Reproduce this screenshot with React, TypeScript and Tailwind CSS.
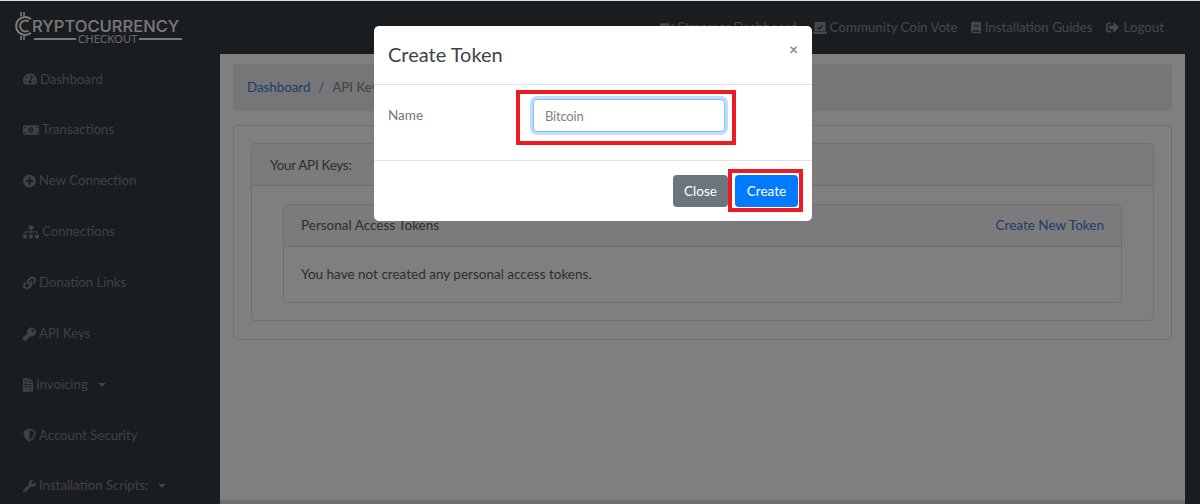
import React from 'react';
import {
  FaTachometerAlt,
  FaMoneyBillAlt,
  FaPlusCircle,
  FaSitemap,
  FaLink,
  FaKey,
  FaFileInvoice,
  FaShieldAlt,
  FaWrench,
  FaVideo,
  FaBook,
  FaSignOutAlt,
} from 'react-icons/fa';

const sideItems = [
  { label: 'Dashboard', icon: FaTachometerAlt, w: 'w-[14px]' },
  { label: 'Transactions', icon: FaMoneyBillAlt, w: 'w-[16px]' },
  { label: 'New Connection', icon: FaPlusCircle, w: 'w-[13px]' },
  { label: 'Connections', icon: FaSitemap, w: 'w-[16px]' },
  { label: 'Donation Links', icon: FaLink, w: 'w-[13px]' },
  { label: 'API Keys', icon: FaKey, w: 'w-[13px]' },
  { label: 'Invoicing', icon: FaFileInvoice, w: 'w-[10px]', caret: true },
  { label: 'Account Security', icon: FaShieldAlt, w: 'w-[13px]' },
  { label: 'Installation Scripts:', icon: FaWrench, w: 'w-[13px]', caret: true },
];

function LaptopCheck(): React.JSX.Element {
  return (
    <svg width="14" height="12" viewBox="0 0 14 12" className="shrink-0">
      <path
        fillRule="evenodd"
        fill="currentColor"
        d="M2.5 0h9a1 1 0 0 1 1 1v8h-11V1a1 1 0 0 1 1-1zM0 9.5h14V11a1 1 0 0 1-1 1H1a1 1 0 0 1-1-1z"
      />
      <path d="M4.5 5l2 2 3-3.5" fill="none" stroke="#343a40" strokeWidth="1.2" />
    </svg>
  );
}

function Logo(): React.JSX.Element {
  return (
    <div className="flex items-start text-[#f2f2f2] ml-[14px] mt-[1px]">
      <svg width="19" height="30" viewBox="0 0 19 30" fill="none" stroke="currentColor" className="mt-[-1px]">
        <path d="M17 8.2A9 9 0 1 0 17 21.8" strokeWidth="2" />
        <path d="M14.5 10.5A5.4 5.4 0 1 0 14.5 19.5" strokeWidth="2" />
        <path d="M7 1v4M10 1v4M7 25v4M10 25v4" strokeWidth="1.6" />
      </svg>
      <div className="w-[149px]">
        <div className="text-[16.5px] leading-[14px] font-medium mt-[7px] whitespace-nowrap font-['Inter',sans-serif] tracking-[0.03px] ml-[-1px]">
          RYPTOCURRENCY
        </div>
        <div className="flex items-center gap-[2px] mt-[1px] ml-[1px]">
          <span className="h-[2px] w-[43px] bg-[#f2f2f2]" />
          <span className="text-[11px] leading-[10px] w-[59px] text-center text-[#cfcfcf]">CHECKOUT</span>
          <span className="h-[2px] w-[44px] bg-[#f2f2f2]" />
        </div>
      </div>
    </div>
  );
}

function CreateTokenModal(): React.JSX.Element {
  return (
    <div className="absolute left-[374px] top-[26px] w-[438px] h-[195px] bg-white rounded-[5px] text-[#73767a]">
      <div className="h-[59px] border-b border-[#dee2e6] flex items-center justify-between pl-[14px] pr-[14px] pb-[2px]">
        <h5 className="text-[20px] text-[#3f4346] font-normal">Create Token</h5>
        <span className="text-[15px] font-bold text-[#888] mb-[10px] leading-none">×</span>
      </div>
      <div className="h-[76px] border-b border-[#dee2e6] flex items-center pl-[14px] pb-[14px]">
        <span className="w-[145px] text-[13.5px]">Name</span>
        <div className="relative">
          <input
            readOnly
            value="Bitcoin"
            className="block w-[192px] h-[33px] rounded-[4px] border border-[#80bdff] ring-[3px] ring-[#bfdeff] bg-white px-[11px] text-[13px] tracking-[-0.2px] text-[#7d8084] outline-none"
          />
          <div className="absolute left-[-17px] top-[-9px] w-[220px] h-[55px] border-[4px] border-[#ed1c24] pointer-events-none" />
        </div>
      </div>
      <div className="flex justify-end items-start gap-[7px] pt-[14px] pr-[14px]">
        <button type="button" className="w-[55px] h-[32px] rounded-[4px] bg-[#6c757d] text-white text-[13.5px]">
          Close
        </button>
        <div className="relative">
          <button type="button" className="block w-[63px] h-[32px] rounded-[4px] bg-[#007bff] text-white text-[13.5px]">
            Create
          </button>
          <div className="absolute left-[-7px] top-[-6px] w-[75px] h-[43px] border-[4px] border-[#ed1c24] pointer-events-none" />
        </div>
      </div>
    </div>
  );
}

export default function App(): React.JSX.Element {
  return (
    <div className="relative h-[504px] w-[1200px] overflow-hidden bg-white font-['Lato','Liberation_Sans',sans-serif] text-[13.5px]">
      <div className="h-[1px] bg-white" />
      <header className="h-[53px] bg-[#343a40] flex items-center">
        <Logo />
        <nav className="ml-auto flex items-center gap-[13px] pr-[36px] text-[13.3px] text-[#8e9194]">
          <a href="#!" className="flex items-center gap-[4px] mr-[3px]">
            <FaVideo className="w-[14px] h-[14px]" />
            Streamer Dashboard
          </a>
          <a href="#!" className="flex items-center gap-[3px]">
            <LaptopCheck />
            Community Coin Vote
          </a>
          <a href="#!" className="flex items-center gap-[4px]">
            <FaBook className="w-[10px] h-[13px]" />
            Installation Guides
          </a>
          <a href="#!" className="flex items-center gap-[5px]">
            <FaSignOutAlt className="w-[13px] h-[13px]" />
            Logout
          </a>
        </nav>
      </header>

      <div className="flex h-[450px]">
        <aside className="w-[220px] bg-[#343a40] text-[13.2px] text-[#7f8285]">
          {sideItems.map((item) => (
            <a key={item.label} href="#!" className="flex items-center h-[50.87px] pl-[23px]">
              <item.icon className={`${item.w} h-[14px] mr-[3px] shrink-0`} />
              {item.label}
              {item.caret && (
                <span className="ml-[10px] border-x-[4px] border-t-[4px] border-x-transparent border-t-[#7f8285]" />
              )}
            </a>
          ))}
        </aside>

        <main className="flex-1 flex flex-col text-[#5a5d60]">
          <div className="flex-1 px-[13px] pt-[10px]">
            <div className="h-[47px] rounded-[4px] bg-[#e9ecef] flex items-center px-[14px] mb-[14px] text-[13.3px]">
              <a href="#!" className="text-[#3f78d6]">Dashboard</a>
              <span className="mx-[8px] text-[#7c848c]">/</span>
              <span className="text-[#7c848c]">API Keys</span>
            </div>
            <div className="h-[215px] border border-[#dfdfdf] rounded-[4px] p-[17px]">
              <div className="h-[178px] border border-[#dfdfdf] rounded-[4px]">
                <div className="h-[42px] border-b border-[#dfdfdf] bg-[#f7f7f7] flex items-center px-[18px] pt-[2px] tracking-[-0.3px]">
                  Your API Keys:
                </div>
                <div className="px-[31px] pt-[18px]">
                  <div className="h-[99px] border border-[#dfdfdf] rounded-[4px]">
                    <div className="h-[42px] border-b border-[#dfdfdf] bg-[#f7f7f7] flex items-center justify-between px-[17px]">
                      <span>Personal Access Tokens</span>
                      <a href="#!" className="text-[#3f78d6]">Create New Token</a>
                    </div>
                    <div className="h-[55px] flex items-center px-[17px]">
                      You have not created any personal access tokens.
                    </div>
                  </div>
                </div>
              </div>
            </div>
          </div>
          <div className="h-[4px] bg-[#dcdcdc]" />
        </main>
        <div className="w-[15px] bg-[#343a40]" />
      </div>

      {/* backdrop + dialog sit over the page */}
      <div className="absolute inset-x-0 top-[1px] bottom-0 bg-black/50" />
      <div className="absolute inset-x-0 top-0 h-[1px] bg-[#dedede]" />
      <CreateTokenModal />
    </div>
  );
}
